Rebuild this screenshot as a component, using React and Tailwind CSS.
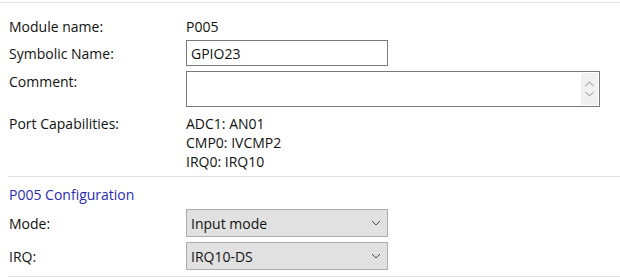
import React from "react";

function Chevron() {
  return (
    <svg width="10" height="6" viewBox="0 0 10 6" className="shrink-0">
      <path d="M1 1 L5 5 L9 1" fill="none" stroke="#4a4a4a" strokeWidth="1" />
    </svg>
  );
}

function Select({ value }) {
  return (
    <div className="flex h-[28px] w-[202px] items-center justify-between border border-[#adadad] bg-[#e1e1e1] pl-[4px] pr-[6px]">
      <span>{value}</span>
      <Chevron />
    </div>
  );
}

export default function App() {
  return (
    <div
      className="h-[278px] w-[620px] overflow-hidden bg-white text-[14px] leading-[19px] text-[#111111]"
      style={{ fontFamily: '"Open Sans", "Noto Sans", sans-serif' }}
    >
      <div className="mt-[2px] h-px bg-[#e3e3e3]" />
      <div className="pl-[9px]">
        <div className="mt-[14px] flex h-[19px]">
          <div className="w-[177px]">Module name:</div>
          <div>P005</div>
        </div>
        <div className="mt-[4px] flex items-center">
          <div className="w-[177px]">Symbolic Name:</div>
          <div className="flex h-[26px] w-[202px] items-center border border-[#7a7a7a] px-[4px]">GPIO23</div>
        </div>
        <div className="mt-[5px] flex items-start">
          <div className="w-[177px] pt-[1px]">Comment:</div>
          <div className="flex h-[36px] w-[414px] justify-end border border-[#7a7a7a] p-px">
            <div className="flex w-[17px] flex-col items-center justify-center gap-[4px] bg-[#f0f0f0]">
              <svg width="9" height="6" viewBox="0 0 9 6">
                <path d="M0.5 5 L4.5 1 L8.5 5" fill="none" stroke="#b4b4b4" strokeWidth="1.1" />
              </svg>
              <svg width="9" height="6" viewBox="0 0 9 6">
                <path d="M0.5 1 L4.5 5 L8.5 1" fill="none" stroke="#b4b4b4" strokeWidth="1.1" />
              </svg>
            </div>
          </div>
        </div>
        <div className="mt-[7px] flex">
          <div className="w-[177px]">Port Capabilities:</div>
          <div className="flex flex-col">
            <span>ADC1: AN01</span>
            <span>CMP0: IVCMP2</span>
            <span>IRQ0: IRQ10</span>
          </div>
        </div>
      </div>
      <div className="ml-[8px] mt-[5px] h-px bg-[#e3e3e3]" />
      <div className="pl-[9px]">
        <div className="mt-[8px] text-[#2b2bb3]">P005 Configuration</div>
        <div className="mt-[5px] flex items-center">
          <div className="w-[177px]">Mode:</div>
          <Select value="Input mode" />
        </div>
        <div className="mt-[5px] flex items-center">
          <div className="w-[177px]">IRQ:</div>
          <Select value="IRQ10-DS" />
        </div>
      </div>
      <div className="ml-[8px] mt-[6px] h-px bg-[#e3e3e3]" />
    </div>
  );
}
